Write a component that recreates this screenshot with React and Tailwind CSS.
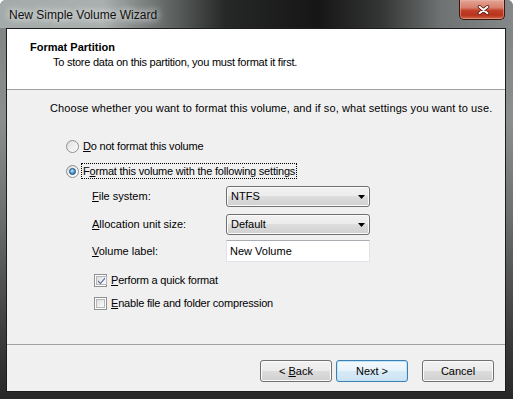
import React from "react";

function Radio({ checked }) {
  return (
    <span className="w-[13px] h-[13px] rounded-full border border-[#8e8f8f] bg-[linear-gradient(135deg,#d4d4d4,#f6f6f6_60%,#ffffff)] flex items-center justify-center shrink-0">
      <span className="w-[9px] h-[9px] rounded-full bg-[linear-gradient(135deg,#e2e2e2,#f9f9f9)] flex items-center justify-center">
        {checked && (
          <span className="w-[7px] h-[7px] rounded-full border border-[#1b4a7a] bg-[radial-gradient(circle_at_40%_35%,#c7ecff_0%,#57a7e0_45%,#1d5f9f_100%)]" />
        )}
      </span>
    </span>
  );
}

function Check({ checked }) {
  return (
    <span className="w-[13px] h-[13px] border border-[#8e8f8f] bg-white p-[1px] shrink-0 flex">
      <span className="flex-1 border border-[#b4b6b8] bg-[linear-gradient(135deg,#dcdedf,#f4f4f4_70%,#fbfbfb)] flex items-center justify-center">
        {checked && (
          <svg width="9" height="9" viewBox="0 0 9 9">
            <path d="M1 4.2 L3.4 6.8 L8 1.4 L8 3 L3.4 8.2 L1 5.8 Z" fill="#4a5c91" />
          </svg>
        )}
      </span>
    </span>
  );
}

function Combo({ value }) {
  return (
    <div className="w-[144px] h-[21px] rounded-[3px] border border-[#707070] bg-[linear-gradient(#f2f2f2,#ebebeb_50%,#dddddd_50%,#cfcfcf)] shadow-[inset_0_0_0_1px_#fbfbfb] flex items-center pl-[4px] pr-[4px]">
      <span className="flex-1">{value}</span>
      <svg width="7" height="4" viewBox="0 0 7 4">
        <path d="M0 0 H7 L3.5 4 Z" fill="#000" />
      </svg>
    </div>
  );
}

function Btn({ children, def }) {
  return (
    <div
      className={
        def
          ? "w-[72px] h-[22px] rounded-[3px] border border-[#3c7fb1] bg-[linear-gradient(#f3f9fd,#e8f3fa_50%,#d7eaf6_50%,#cde3f2)] shadow-[inset_0_0_0_1px_#bfe3f8] flex items-center justify-center"
          : "w-[72px] h-[22px] rounded-[3px] border border-[#707070] bg-[linear-gradient(#f2f2f2,#ebebeb_50%,#dddddd_50%,#cfcfcf)] shadow-[inset_0_0_0_1px_#fbfbfb] flex items-center justify-center"
      }
    >
      {children}
    </div>
  );
}

export default function App() {
  return (
    <div className="w-[513px] h-[399px] flex flex-col pl-[6px] pr-[7px] pb-[7px] rounded-t-[6px] overflow-hidden bg-[linear-gradient(#7d8382,#8a8f8f_30%,#6a6e6e_55%,#3a3a3a_85%,#272727)] font-['Liberation_Sans',Arial,sans-serif] text-[11px] text-black">
      {/* title bar */}
      <div className="h-[28px] -ml-[6px] -mr-[7px] pl-[9px] pr-[8px] flex items-start justify-between bg-[linear-gradient(90deg,#a3aaa9_0%,#aab0af_20%,#666b6a_32%,#262727_44%,#161616_62%,#333434_74%,#6f7272_86%,#858888_100%)]">
        <div className="pt-[7px] text-[12px] leading-[16px] text-[#111] [text-shadow:0_0_6px_#eef1f0,0_0_10px_#e3e7e6]">
          New Simple Volume Wizard
        </div>
        <div className="w-[46px] h-[20px] rounded-b-[5px] border border-t-0 border-[#3b1610] bg-[linear-gradient(#e4a597,#d77f6c_40%,#c2412a_55%,#b8331c_80%,#d0674c)] shadow-[inset_0_0_0_1px_#f0b8aa80] flex items-center justify-center">
          <svg width="13" height="10" viewBox="0 0 13 10" className="ml-[3px]">
            <path d="M2.5 1.8 L10.5 8.2 M10.5 1.8 L2.5 8.2" stroke="#5a1a10" strokeWidth="3.6" strokeLinecap="round" />
            <path d="M2.5 1.8 L10.5 8.2 M10.5 1.8 L2.5 8.2" stroke="#ffffff" strokeWidth="2" strokeLinecap="round" />
          </svg>
        </div>
      </div>

      {/* client */}
      <div className="flex-1 border border-[#1c1c1c] bg-[#f0f0f0] flex flex-col">
        <div className="h-[61px] bg-white border-b border-[#a0a0a0] pt-[11px] pl-[23px] shrink-0">
          <div className="font-bold leading-[15px]">Format Partition</div>
          <div className="pl-[23px] leading-[15px] tracking-[-0.25px]">
            To store data on this partition, you must format it first.
          </div>
        </div>

        <div className="flex-1 flex flex-col">
          <div className="mt-[11px] ml-[43px] leading-[15px] tracking-[0.1px] whitespace-nowrap">
            Choose whether you want to format this volume, and if so, what settings you want to use.
          </div>

          <div className="mt-[22px] ml-[59px] h-[16px] flex items-center gap-[2px]">
            <Radio />
            <span className="border border-transparent px-[1px] leading-[14px] tracking-[-0.2px]">
              <span className="underline">D</span>o not format this volume
            </span>
          </div>

          <div className="mt-[9px] ml-[59px] h-[16px] flex items-center gap-[2px]">
            <Radio checked />
            <span className="border border-dotted border-black px-[1px] leading-[14px] tracking-[-0.2px]">
              F<span className="underline">o</span>rmat this volume with the following settings
            </span>
          </div>

          <div className="ml-[85px] flex flex-col">
            <div className="mt-[7px] h-[21px] flex items-center">
              <span className="w-[134px]">
                <span className="underline">F</span>ile system:
              </span>
              <Combo value="NTFS" />
            </div>
            <div className="mt-[7px] h-[21px] flex items-center">
              <span className="w-[134px]">
                <span className="underline">A</span>llocation unit size:
              </span>
              <Combo value="Default" />
            </div>
            <div className="mt-[5px] h-[22px] flex items-center">
              <span className="w-[134px]">
                <span className="underline">V</span>olume label:
              </span>
              <div className="w-[144px] h-[22px] bg-white border border-[#e2e3ea] border-t-[#abadb3] flex items-center pl-[3px]">
                New Volume
              </div>
            </div>
          </div>

          <div className="mt-[10px] ml-[87px] h-[16px] flex items-center gap-[4px]">
            <Check checked />
            <span className="tracking-[-0.2px]">
              <span className="underline">P</span>erform a quick format
            </span>
          </div>
          <div className="mt-[7px] ml-[87px] h-[16px] flex items-center gap-[4px]">
            <Check />
            <span className="tracking-[-0.2px]">
              <span className="underline">E</span>nable file and folder compression
            </span>
          </div>

          <div className="mt-[33px] h-px bg-[#a0a0a0]" />

          <div className="mt-[15px] pr-[11px] flex justify-end items-center">
            <Btn>
              &lt; <span className="underline ml-[3px]">B</span>ack
            </Btn>
            <div className="w-[4px]" />
            <Btn def>Next &gt;</Btn>
            <div className="w-[14px]" />
            <Btn>Cancel</Btn>
          </div>
        </div>
      </div>
    </div>
  );
}
